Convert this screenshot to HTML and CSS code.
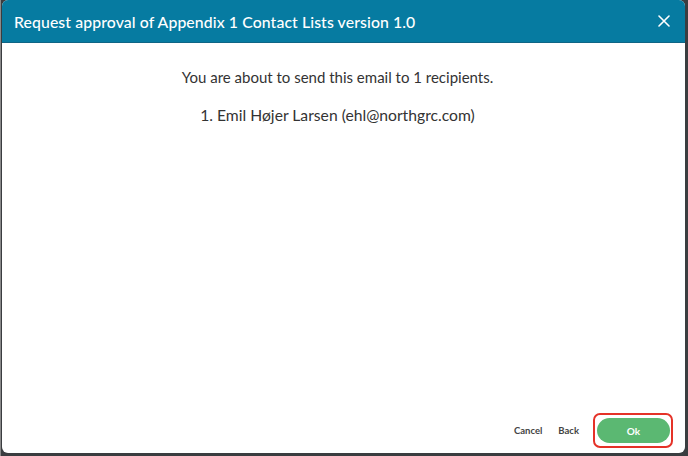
FILE: index.html
```html
<!DOCTYPE html>
<html lang="en">
<head>
  <meta charset="UTF-8">
  <title>Request approval</title>
  <link rel="stylesheet" href="styles.css">
</head>
<body>
  <div class="dialog">
    <div class="dialog-header">
      <h1>Request approval of Appendix 1 Contact Lists version 1.0</h1>
      <button class="close" aria-label="Close">
        <svg width="12" height="12" viewBox="0 0 12 12" fill="none" stroke="currentColor" stroke-width="1.6" stroke-linecap="round">
          <path d="M1 1 L11 11 M11 1 L1 11"></path>
        </svg>
      </button>
    </div>
    <div class="dialog-body">
      <p class="lead">You are about to send this email to 1 recipients.</p>
      <p class="recipient">1. Emil Højer Larsen (ehl@northgrc.com)</p>
    </div>
    <div class="dialog-footer">
      <button class="link-btn">Cancel</button>
      <button class="link-btn">Back</button>
      <div class="highlight">
        <button class="ok-btn">Ok</button>
      </div>
    </div>
  </div>
</body>
</html>
```

FILE: styles.css
```css
html, body {
  height: 100%;
}
body {
  margin: 0;
  background-color: #3a3d40;
  font-family: Lato, 'Open Sans', sans-serif;
  color: #333;
  box-sizing: border-box;
  padding: 0 3px 3px 1px;
  border-left: 1px solid #8a8a8a;
}
.dialog {
  height: 100%;
  background-color: white;
  border-radius: 6px;
  overflow: hidden;
  display: flex;
  flex-direction: column;
}
.dialog-header {
  height: 42px;
  flex-shrink: 0;
  background-color: #067ba1;
  border-bottom: 1px solid #0f6585;
  display: flex;
  align-items: center;
  justify-content: space-between;
  padding: 0 15px 0 12px;
}
.dialog-header h1 {
  margin: 0;
  font-family: Lato, 'Open Sans', sans-serif;
  font-size: 15.8px;
  font-weight: 500;
  color: white;
  letter-spacing: 0.1px;
}
.close {
  background: none;
  border: none;
  padding: 0;
  color: white;
  display: flex;
  cursor: pointer;
}
.dialog-body {
  flex: 1;
  text-align: center;
  padding: 23px 12px 0 0;
}
.lead {
  margin: 0;
  font-size: 15px;
  line-height: 22px;
}
.recipient {
  margin: 16px 0 0;
  font-size: 15.7px;
  line-height: 22px;
}
.dialog-footer {
  display: flex;
  align-items: center;
  justify-content: flex-end;
  padding: 0 12px 5px 0;
}
.link-btn {
  background: none;
  border: none;
  font-family: Lato, sans-serif;
  font-weight: 700;
  font-size: 9.5px;
  color: #444;
  padding: 0;
  margin-right: 16px;
  cursor: pointer;
}
.link-btn:nth-child(2) {
  margin-right: 14px;
}
.highlight {
  border: 2px solid #e53228;
  border-radius: 7px;
  padding: 3px 1px 3px 2px;
}
.ok-btn {
  display: block;
  width: 73px;
  height: 25px;
  border: none;
  border-radius: 13px;
  background-color: #5bb872;
  color: white;
  font-family: Lato, sans-serif;
  font-weight: 700;
  font-size: 10px;
  cursor: pointer;
}
```
